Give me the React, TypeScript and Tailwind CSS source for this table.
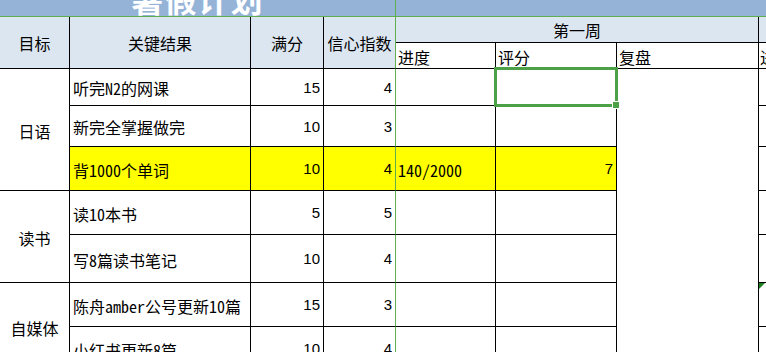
import React from "react";

const CJK = { fontFamily: '"Noto Sans Mono CJK SC", "Noto Sans CJK SC", sans-serif' };
const NUM = { fontFamily: '"Liberation Sans", Arial, sans-serif' };

type Row = { kr: string; full: number; conf: number; prog?: string; score?: number; hl?: boolean };

const rows: Row[] = [
  { kr: "听完N2的网课", full: 15, conf: 4 },
  { kr: "新完全掌握做完", full: 10, conf: 3 },
  { kr: "背1000个单词", full: 10, conf: 4, prog: "140/2000", score: 7, hl: true },
  { kr: "读10本书", full: 5, conf: 5 },
  { kr: "写8篇读书笔记", full: 10, conf: 4 },
  { kr: "陈舟amber公号更新10篇", full: 15, conf: 3 },
  { kr: "小红书更新8篇", full: 10, conf: 4 },
];

const rowStart = ["row-start-4", "row-start-5", "row-start-6", "row-start-7", "row-start-8", "row-start-9", "row-start-10"];

export default function App() {
  return (
    <div className="relative w-[766px] h-[352px] overflow-hidden bg-white text-black" style={CJK}>
      <div className="grid grid-cols-[70px_181px_73px_72px_100px_121px_142px_1fr] grid-rows-[17px_26px_26px_37px_41px_44px_44px_48px_44px_44px] w-[766px]">
        {/* title */}
        <div className="col-start-1 col-span-4 row-start-1 bg-[#95b3d7] border-r border-b border-[#5fae4f] flex justify-center items-end overflow-hidden">
          <span className="text-[32px] leading-[32px] font-bold text-white mb-[2px] whitespace-nowrap tracking-[1px]">暑假计划</span>
        </div>
        <div className="col-start-5 col-span-4 row-start-1 bg-[#95b3d7] border-b border-[#5fae4f]" />

        {/* header */}
        <div className="col-start-1 row-start-2 row-span-2 bg-[#dce6f1] border-r border-b border-black flex items-center justify-center text-[16px]">目标</div>
        <div className="col-start-2 row-start-2 row-span-2 bg-[#dce6f1] border-r border-b border-black flex items-center justify-center text-[16px]">关键结果</div>
        <div className="col-start-3 row-start-2 row-span-2 bg-[#dce6f1] border-r border-b border-black flex items-center justify-center text-[16px]">满分</div>
        <div className="col-start-4 row-start-2 row-span-2 bg-[#dce6f1] border-r border-r-[#5fae4f] border-b border-b-black flex items-center justify-center text-[16px]">信心指数</div>
        <div className="col-start-5 col-span-3 row-start-2 bg-[#dce6f1] border-r border-b border-black flex items-center justify-center text-[16px]">第一周</div>
        <div className="col-start-8 row-start-2 bg-[#dce6f1] border-b border-black" />
        <div className="col-start-5 row-start-3 border-r border-b border-black flex items-center pl-[2px] pt-[2px] text-[16px]">进度</div>
        <div className="col-start-6 row-start-3 border-r border-b border-black flex items-center pl-[2px] pt-[2px] text-[16px]">评分</div>
        <div className="col-start-7 row-start-3 border-r border-b border-black flex items-center pl-[2px] pt-[2px] text-[16px]">复盘</div>
        <div className="col-start-8 row-start-3 border-b border-black flex items-center pl-[1px] pt-[2px] text-[16px] overflow-hidden whitespace-nowrap">进度</div>

        {/* objectives */}
        <div className="col-start-1 row-start-4 row-span-3 border-r border-b border-black flex items-center justify-center pt-[3px] text-[16px]">日语</div>
        <div className="col-start-1 row-start-7 row-span-2 border-r border-b border-black flex items-center justify-center pt-[3px] text-[16px]">读书</div>
        <div className="col-start-1 row-start-9 row-span-2 border-r border-b border-black flex items-center justify-center pt-[3px] text-[16px]">自媒体</div>

        {rows.map((r, i) => {
          const bg = r.hl ? "bg-[#ffff00]" : "bg-white";
          return (
            <React.Fragment key={i}>
              <div className={`col-start-2 ${rowStart[i]} ${bg} border-r border-b border-black flex items-center pl-[3px] pt-[2px] text-[16px] whitespace-nowrap overflow-hidden`}>{r.kr}</div>
              <div className={`col-start-3 ${rowStart[i]} ${bg} border-r border-b border-black flex items-center justify-end pr-[3px] pt-[2px] text-[15px]`} style={NUM}>{r.full}</div>
              <div className={`col-start-4 ${rowStart[i]} ${bg} border-r border-r-[#5fae4f] border-b border-b-black flex items-center justify-end pr-[3px] pt-[2px] text-[15px]`} style={NUM}>{r.conf}</div>
              <div className={`col-start-5 ${rowStart[i]} ${bg} border-r border-b border-black flex items-center pl-[2px] pt-[2px] text-[16px] whitespace-nowrap`}>{r.prog ?? ""}</div>
              <div className={`col-start-6 ${rowStart[i]} ${bg} border-r border-b border-black flex items-center justify-end pr-[3px] pt-[2px] text-[15px]`} style={NUM}>{r.score ?? ""}</div>
              <div className={`col-start-8 ${rowStart[i]} border-b border-black relative`}>
                {i === 5 && (
                  <svg className="absolute left-0 top-0" width="6" height="6" viewBox="0 0 6 6">
                    <polygon points="0,0 6,0 0,6" fill="#1e7f1e" />
                  </svg>
                )}
              </div>
            </React.Fragment>
          );
        })}

        {/* review merged */}
        <div className="col-start-7 row-start-4 row-span-7 border-r border-black" />
      </div>

      {/* selection */}
      <div className="absolute left-[494px] top-[67px] w-[124px] h-[40px] border-[3px] border-[#4ca146]" />
      <div className="absolute left-[612px] top-[101px] w-[8px] h-[8px] bg-[#4ca146] border border-white" />
    </div>
  );
}
